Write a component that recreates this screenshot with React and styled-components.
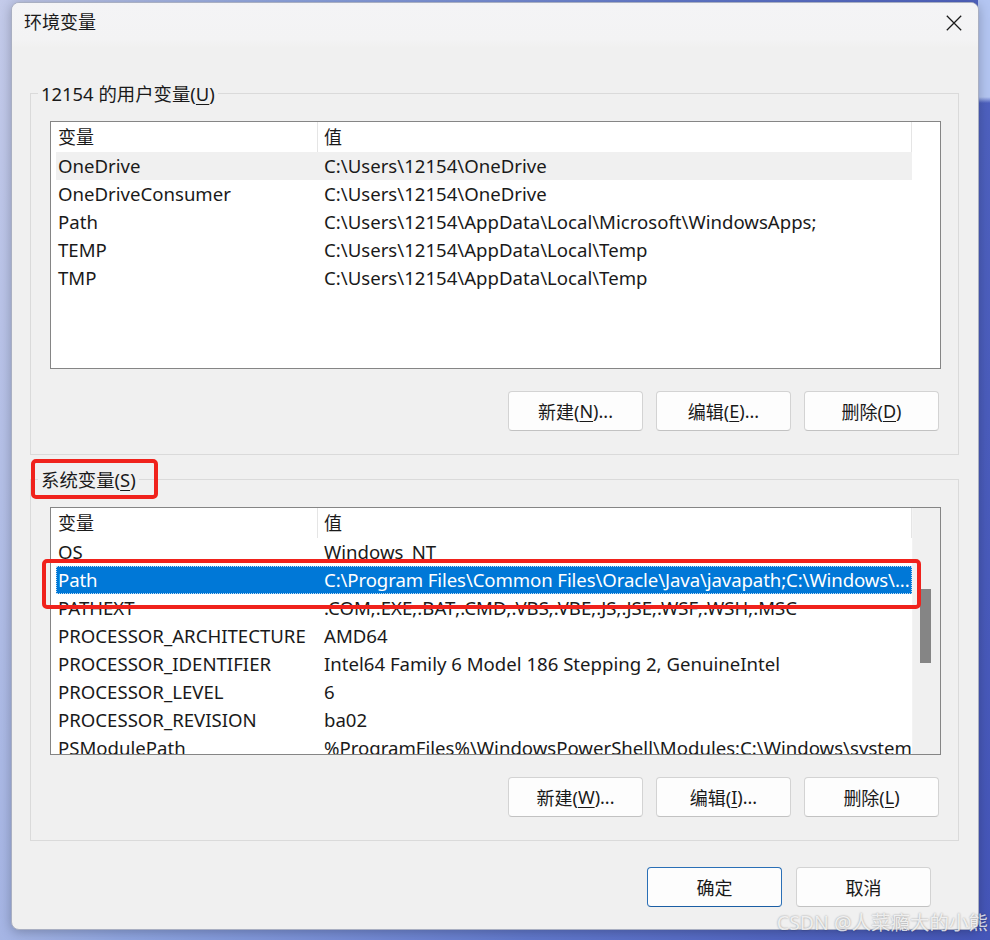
import React from "react";
import styled, { createGlobalStyle, css } from "styled-components";

const GlobalStyle = createGlobalStyle`
  html, body { margin: 0; padding: 0; }
  body {
    background: #5d72c9;
    font-family: "Noto Sans", "Noto Sans CJK SC", sans-serif;
    color: #1a1a1a;
  }
  * { box-sizing: border-box; }
`;

const Page = styled.div`
  position: relative;
  width: 990px;
  height: 940px;
  padding: 2px 11px 10px 11px;
  display: flex;
  overflow: hidden;
  background:
    linear-gradient(180deg, #b4c6f2 0, #b4c6f2 97px, rgba(180, 198, 242, 0) 103px) right top / 12px 100% no-repeat,
    linear-gradient(100deg, #c4cbea 0%, #8fa5e0 25%, #6178cc 60%, #4556b9 100%);
`;

const Dialog = styled.div`
  flex: 1;
  display: flex;
  flex-direction: column;
  background: #f0f0f0;
  border: 1px solid #a9afc2;
  border-radius: 8px;
  box-shadow: 0 2px 12px rgba(0, 0, 0, 0.25);
  overflow: hidden;
`;

const TitleBar = styled.div`
  height: 45px;
  flex: none;
  display: flex;
  align-items: flex-start;
  justify-content: space-between;
  padding-left: 12px;
  background: linear-gradient(180deg, #f4f4f6 0%, #f3f3f4 80%, #f0f0f0 100%);
`;

const Title = styled.div`
  font-size: 18px;
  line-height: 39px;
  color: #1a1a1a;
`;

const CloseButton = styled.div`
  width: 48px;
  height: 40px;
  display: flex;
  align-items: center;
  justify-content: center;
`;

const Body = styled.div`
  flex: 1;
  display: flex;
  flex-direction: column;
  padding: 34px 19px 0 18px;
`;

const Group = styled.section`
  display: flex;
  flex-direction: column;
  margin-top: ${(p) => (p.$first ? "0" : "13px")};
`;

const GroupHead = styled.div`
  display: flex;
  align-items: flex-end;
  height: 24px;
  &::before {
    content: "";
    width: 7px;
    height: 12px;
    border-top: 1px solid #dadada;
    border-left: 1px solid #dadada;
  }
  &::after {
    content: "";
    flex: 1;
    height: 12px;
    border-top: 1px solid #dadada;
    border-right: 1px solid #dadada;
  }
`;

const GroupLabel = styled.span`
  position: relative;
  align-self: stretch;
  padding: 0 3px;
  font-size: 18.4px;
  line-height: 24px;
  color: #1a1a1a;
  white-space: nowrap;
  ${(p) =>
    p.$marked &&
    css`
      &::after {
        content: "";
        position: absolute;
        top: -9px;
        bottom: -7px;
        left: -7px;
        right: -19px;
        border: 4px solid #f0221c;
        border-radius: 5px;
      }
    `}
`;

const GroupBody = styled.div`
  border: 1px solid #dadada;
  border-top: none;
  padding: 15px 17px 23px 19px;
  display: flex;
  flex-direction: column;
`;

const ListView = styled.div`
  position: relative;
  height: 248px;
  display: flex;
  background: #fff;
  border: 1px solid #858585;
  ${(p) =>
    p.$markTop != null &&
    css`
      &::after {
        content: "";
        position: absolute;
        top: ${p.$markTop}px;
        left: -9px;
        right: 19px;
        height: 42px;
        border: 4px solid #f0221c;
        border-radius: 5px;
        pointer-events: none;
      }
    `}
`;

const ListMain = styled.div`
  width: 861px;
  flex: none;
  display: flex;
  flex-direction: column;
  overflow: hidden;
`;

const Header = styled.div`
  height: 30px;
  flex: none;
  display: grid;
  grid-template-columns: 267px 1fr;
  border-right: 1px solid #e5e5e5;
`;

const HeadCell = styled.div`
  font-size: 18px;
  line-height: 30px;
  padding-left: ${(p) => (p.$first ? "7px" : "6px")};
  border-right: ${(p) => (p.$first ? "1px solid #e5e5e5" : "none")};
  white-space: nowrap;
`;

const Rows = styled.div`
  flex: 1;
  overflow: hidden;
  padding-left: 5px;
  display: flex;
  flex-direction: column;
`;

const Row = styled.div`
  flex: none;
  height: 28px;
  display: grid;
  grid-template-columns: 261px 1fr;
  font-size: 18.6px;
  line-height: 28px;
  color: #1a1a1a;
  ${(p) =>
    p.$state === "inactive" &&
    css`
      background: #f0f0f0;
    `}
  ${(p) =>
    p.$state === "active" &&
    css`
      background: #0078d7;
      color: #fff;
      letter-spacing: -0.1px;
      outline: 1px dotted rgba(255, 255, 255, 0.75);
      outline-offset: -1px;
    `}
`;

const Cell = styled.div`
  white-space: nowrap;
  overflow: hidden;
  padding-left: ${(p) => (p.$first ? "2px" : "7px")};
`;

const Gutter = styled.div`
  flex: 1;
  background: #fff;
`;

const ScrollTrack = styled.div`
  flex: 1;
  background: #f0f0f0;
  border-left: 1px solid #f3f3f3;
  padding-top: ${(p) => p.$offset}px;
  padding-left: 7px;
`;

const ScrollThumb = styled.div`
  width: 11px;
  height: ${(p) => p.$size}px;
  background: #858585;
`;

const ButtonRow = styled.div`
  display: flex;
  justify-content: flex-end;
  gap: ${(p) => p.$gap || 13}px;
  margin-top: ${(p) => p.$top || 22}px;
  padding-right: ${(p) => p.$right || 2}px;
`;

const Button = styled.div`
  width: 135px;
  height: 40px;
  display: flex;
  align-items: center;
  justify-content: center;
  font-size: 18px;
  color: #1a1a1a;
  background: #fdfdfd;
  border: 1px solid ${(p) => (p.$primary ? "#2a6fb6" : "#d3d3d3")};
  border-bottom-color: ${(p) => (p.$primary ? "#1b5ea4" : "#c2c2c2")};
  border-radius: 4px;
  white-space: nowrap;
`;

const Key = styled.span`
  text-decoration: underline;
  text-underline-offset: 3px;
  text-decoration-thickness: 1px;
`;

const Watermark = styled.div`
  position: absolute;
  right: 2px;
  bottom: 5px;
  font-size: 19.5px;
  line-height: 24px;
  color: rgba(255, 255, 255, 0.8);
  text-shadow: 0 0 2px rgba(0, 0, 0, 0.4);
  white-space: nowrap;
  pointer-events: none;
`;

const userVars = [
  ["OneDrive", "C:\\Users\\12154\\OneDrive", "inactive"],
  ["OneDriveConsumer", "C:\\Users\\12154\\OneDrive"],
  ["Path", "C:\\Users\\12154\\AppData\\Local\\Microsoft\\WindowsApps;"],
  ["TEMP", "C:\\Users\\12154\\AppData\\Local\\Temp"],
  ["TMP", "C:\\Users\\12154\\AppData\\Local\\Temp"],
];

const sysVars = [
  ["OS", "Windows_NT"],
  ["Path", "C:\\Program Files\\Common Files\\Oracle\\Java\\javapath;C:\\Windows\\...", "active"],
  ["PATHEXT", ".COM;.EXE;.BAT;.CMD;.VBS;.VBE;.JS;.JSE;.WSF;.WSH;.MSC"],
  ["PROCESSOR_ARCHITECTURE", "AMD64"],
  ["PROCESSOR_IDENTIFIER", "Intel64 Family 6 Model 186 Stepping 2, GenuineIntel"],
  ["PROCESSOR_LEVEL", "6"],
  ["PROCESSOR_REVISION", "ba02"],
  ["PSModulePath", "%ProgramFiles%\\WindowsPowerShell\\Modules;C:\\Windows\\system32\\WindowsPowerShell\\v1.0\\Modules"],
];

function VarList({ rows, scroll, markTop }) {
  return (
    <ListView $markTop={markTop}>
      <ListMain>
        <Header>
          <HeadCell $first>变量</HeadCell>
          <HeadCell>值</HeadCell>
        </Header>
        <Rows>
          {rows.map(([name, value, state], i) => (
            <Row key={i} $state={state}>
              <Cell $first>{name}</Cell>
              <Cell>{value}</Cell>
            </Row>
          ))}
        </Rows>
      </ListMain>
      {scroll ? (
        <ScrollTrack $offset={81}>
          <ScrollThumb $size={74} />
        </ScrollTrack>
      ) : (
        <Gutter />
      )}
    </ListView>
  );
}

export default function App() {
  return (
    <>
      <GlobalStyle />
      <Page>
        <Dialog>
          <TitleBar>
            <Title>环境变量</Title>
            <CloseButton>
              <svg width="16" height="16" viewBox="0 0 16 16">
                <path d="M0.8 0.8 L15.2 15.2 M15.2 0.8 L0.8 15.2" stroke="#1a1a1a" strokeWidth="1.25" fill="none" />
              </svg>
            </CloseButton>
          </TitleBar>
          <Body>
            <Group $first>
              <GroupHead>
                <GroupLabel>
                  12154 的用户变量(<Key>U</Key>)
                </GroupLabel>
              </GroupHead>
              <GroupBody>
                <VarList rows={userVars} />
                <ButtonRow>
                  <Button>新建(<Key>N</Key>)...</Button>
                  <Button>编辑(<Key>E</Key>)...</Button>
                  <Button>删除(<Key>D</Key>)</Button>
                </ButtonRow>
              </GroupBody>
            </Group>
            <Group>
              <GroupHead>
                <GroupLabel $marked>
                  系统变量(<Key>S</Key>)
                </GroupLabel>
              </GroupHead>
              <GroupBody>
                <VarList rows={sysVars} scroll markTop={51} />
                <ButtonRow>
                  <Button>新建(<Key>W</Key>)...</Button>
                  <Button>编辑(<Key>I</Key>)...</Button>
                  <Button>删除(<Key>L</Key>)</Button>
                </ButtonRow>
              </GroupBody>
            </Group>
            <ButtonRow $top={26} $right={28} $gap={14}>
              <Button $primary>确定</Button>
              <Button>取消</Button>
            </ButtonRow>
          </Body>
        </Dialog>
        <Watermark>CSDN @人菜瘾大的小熊</Watermark>
      </Page>
    </>
  );
}
